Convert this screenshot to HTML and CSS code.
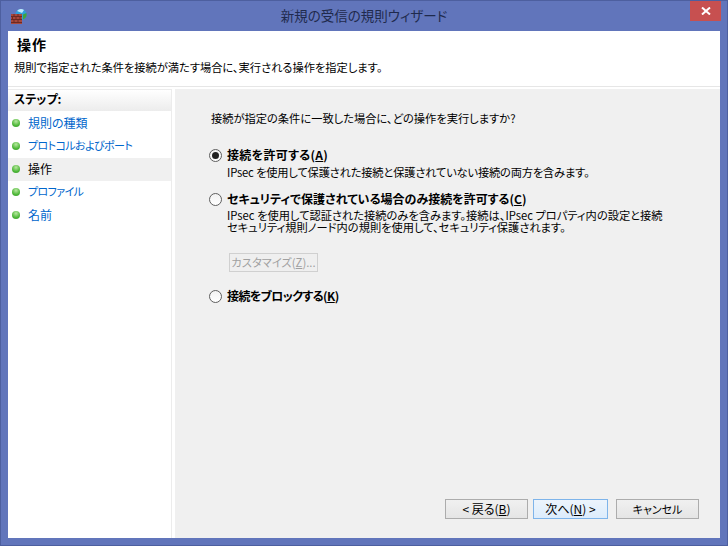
FILE: index.html
```html
<!DOCTYPE html>
<html lang="ja">
<head>
<meta charset="utf-8">
<title>新規の受信の規則ウィザード</title>
<link rel="stylesheet" href="styles.css">
</head>
<body>
<div class="window">
  <div class="titlebar">
    <svg class="app-icon" width="16" height="15" viewBox="0 0 16 15">
      <circle cx="10" cy="5.500" r="5.500" fill="#2f9fd8"/>
      <path d="M6 2a5.500 5.500 0 0 1 7-1l-2 3z" fill="#bfe8fb"/>
      <path d="M12 10.500a5.500 5.500 0 0 0 3.400-6.500l-3.400 1.500z" fill="#3fa33f"/>
      <rect x="0" y="5" width="11" height="10" fill="#a8483c"/>
      <path d="M0 7.500h11M0 10.500h11M0 13.500h11M3 5v2.500M7 5v2.500M1.500 7.500v3M5 7.500v3M9 7.500v3M3 10.500v3M7 10.500v3" stroke="#6e2a22" stroke-width="1" fill="none"/>
    </svg>
    <div class="title">新規の受信の規則ウィザード</div>
    <div class="close"><svg width="10" height="8" viewBox="0 0 10 8"><path d="M1 0.500l8 7M9 0.500l-8 7" stroke="#fff" stroke-width="2" fill="none"/></svg></div>
  </div>
  <div class="client">
    <header class="head">
      <h1 class="head-title">操作</h1>
      <p class="head-desc">規則で指定された条件を接続が満たす場合に、実行される操作を指定します。</p>
    </header>
    <div class="main">
      <nav class="steps">
        <div class="steps-title">ステップ:</div>
        <ul class="step-list">
          <li class="step"><span class="dot"></span><span class="step-link">規則の種類</span></li>
          <li class="step"><span class="dot"></span><span class="step-link kana">プロトコルおよびポート</span></li>
          <li class="step current"><span class="dot"></span><span>操作</span></li>
          <li class="step"><span class="dot"></span><span class="step-link kana">プロファイル</span></li>
          <li class="step"><span class="dot"></span><span class="step-link">名前</span></li>
        </ul>
      </nav>
      <section class="panel">
        <p class="question">接続が指定の条件に一致した場合に、どの操作を実行しますか?</p>
        <div class="options">
          <div class="option first">
            <div class="opt-row"><span class="radio on"></span><span class="opt-label wide">接続を許可する(<u>A</u>)</span></div>
            <p class="opt-desc snug">IPsec を使用して保護された接続と保護されていない接続の両方を含みます。</p>
          </div>
          <div class="option second">
            <div class="opt-row"><span class="radio"></span><span class="opt-label">セキュリティで保護されている場合のみ接続を許可する(<u>C</u>)</span></div>
            <p class="opt-desc close-up">IPsec を使用して認証された接続のみを含みます。接続は、IPsec プロパティ内の設定と接続<br>セキュリティ規則ノード内の規則を使用して、セキュリティ保護されます。</p>
            <button class="btn custom" disabled>カスタマイズ(<u>Z</u>)...</button>
          </div>
          <div class="option third">
            <div class="opt-row"><span class="radio"></span><span class="opt-label tight">接続をブロックする(<u>K</u>)</span></div>
          </div>
        </div>
        <div class="buttons">
          <button class="btn nav">&lt; 戻る(<u>B</u>)</button>
          <button class="btn nav next">次へ(<u>N</u>) &gt;</button>
          <button class="btn nav cancel">キャンセル</button>
        </div>
      </section>
    </div>
  </div>
</div>
</body>
</html>
```
FILE: styles.css
```css
* { box-sizing: border-box; }
html, body { margin: 0; padding: 0; }
body {
  width: 728px;
  height: 546px;
  overflow: hidden;
  font-family: "Noto Sans CJK JP", "Liberation Sans", sans-serif;
  font-size: 12px;
  font-feature-settings: "palt";
  color: #000;
}
.window {
  width: 728px;
  height: 546px;
  display: flex;
  flex-direction: column;
  background: #6175bb;
  border: 1px solid #4d5f9f;
  padding: 0 7px 7px;
}
.titlebar {
  height: 30px;
  flex: none;
  display: flex;
  align-items: center;
  position: relative;
}
.app-icon { flex: none; margin: 0 0 0 3px; }
.title {
  flex: 1;
  text-align: center;
  font-size: 13.500px;
  line-height: 28px;
  padding-bottom: 2px;
  color: #1f2a4d;
  margin-left: -19px;
}
.close {
  position: absolute;
  top: 0;
  right: -1px;
  width: 31px;
  height: 20px;
  background: #c75050;
  display: flex;
  align-items: center;
  justify-content: center;
}
.client {
  flex: 1;
  display: flex;
  flex-direction: column;
  background: #fff;
  min-height: 0;
}
.head {
  height: 56px;
  flex: none;
  padding: 4px 6px 0;
  border-bottom: 1px solid #e6e6e6;
}
.head-title {
  margin: 0 0 0 3px;
  font-size: 14px;
  font-weight: 700;
  line-height: 18px;
  letter-spacing: 1px;
}
.head-desc {
  margin: 7px 0 0;
  font-size: 11.250px;
  line-height: 14px;
  white-space: nowrap;
}
.main {
  flex: 1;
  display: flex;
  min-height: 0;
  padding-top: 2px;
}
.steps {
  width: 164px;
  flex: none;
  border-top: 1px solid #ececec;
  border-right: 1px solid #ececec;
}
.steps-title {
  height: 21px;
  padding-left: 6px;
  font-weight: 700;
  line-height: 18px;
  background: linear-gradient(#ffffff, #ececec);
}
.step-list {
  list-style: none;
  margin: 0;
  padding: 1px 0 0;
}
.step {
  height: 23px;
  width: 163px;
  display: flex;
  align-items: center;
  padding: 0 0 2px 4px;
  line-height: 21px;
}
.step.current { background: #f0f0f0; }
.dot {
  width: 8px;
  height: 8px;
  border-radius: 50%;
  flex: none;
  margin-right: 8px;
  background: radial-gradient(circle at 50% 30%, #b8e8a0, #4fb83a 60%, #3a9a2c);
}
.step-link { color: #0066cc; }
.kana { font-size: 11px; letter-spacing: -0.600px; }
.panel {
  flex: 1;
  margin-left: 3px;
  background: #f0f0f0;
  display: flex;
  flex-direction: column;
  padding: 22px 21px 19px 33px;
  min-width: 0;
}
.question { margin: 0 0 0 3px; line-height: 14px; font-size: 11.250px; }
.options { flex: 1; margin-left: 1px; }
.option.first { margin-top: 22px; }
.option.second { margin-top: 13px; }
.option.third { margin-top: 16px; }
.opt-row { display: flex; align-items: center; height: 16px; }
.radio {
  width: 13px;
  height: 13px;
  border-radius: 50%;
  border: 1px solid #5f5f5f;
  background: linear-gradient(#f2f2f2, #ffffff);
  flex: none;
  margin-right: 5px;
  position: relative;
}
.radio.on::after {
  content: "";
  position: absolute;
  left: 2px;
  top: 2px;
  width: 7px;
  height: 7px;
  border-radius: 50%;
  background: #222;
}
.opt-label { font-weight: 700; white-space: nowrap; padding-bottom: 2px; }
.opt-label.wide { letter-spacing: 0.300px; }
.opt-label.tight { letter-spacing: -0.600px; }
.opt-desc {
  margin: 3px 0 0 18px;
  line-height: 12px;
  font-size: 11.250px;
  white-space: nowrap;
}
.opt-desc.snug { letter-spacing: -0.170px; }
.opt-desc.close-up { margin-top: 2px; }
.btn {
  font-family: inherit;
  font-size: 12px;
  font-feature-settings: inherit;
  height: 20px;
  padding: 0 0 1px;
  border: 1px solid #acacac;
  background: linear-gradient(#f0f0f0, #e5e5e5);
  color: #000;
  line-height: 16px;
  display: block;
  white-space: nowrap;
}
.btn.custom {
  width: 89px;
  height: 19px;
  margin: 20px 0 0 20px;
  font-size: 11.250px;
  color: #a0a0a0;
  background: #efefef;
  border-color: #d0d0d0;
}
.buttons { display: flex; justify-content: flex-end; gap: 5px; }
.btn.nav { width: 83px; }
.btn.next {
  width: 75px;
  border-color: #7eb4ea;
  background: linear-gradient(#ecf4fc, #dcecfc);
}
.btn.cancel { margin-left: 3px; font-size: 11px; }
```
